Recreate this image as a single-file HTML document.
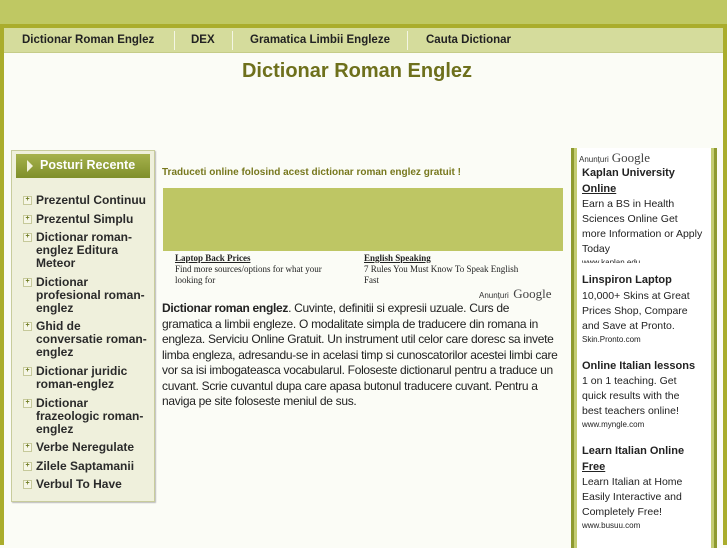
<!DOCTYPE html>
<html><head><meta charset="utf-8"><style>
*{margin:0;padding:0;box-sizing:border-box}
body{width:727px;height:545px;overflow:hidden;background:#fbfcf6;font-family:"Liberation Sans",sans-serif;position:relative;color:#222}
.a{position:absolute}
#top{left:0;top:0;width:727px;height:26px;background:#bfc863}
#frame{left:0;top:24px;width:727px;height:521px;border:4px solid #aaad2c;border-bottom:none;background:#fbfcf6}
#nav{left:4px;top:28px;width:719px;height:25px;background:#d5dc9c;border-bottom:1px solid #c5cc88}
#nav span{position:absolute;top:6px;font-size:11.5px;font-weight:bold;color:#222}
.sep{position:absolute;top:3px;width:1px;height:19px;background:#f4f6e4}
#title{left:0;width:714px;top:60px;text-align:center;font-size:20px;font-weight:bold;color:#6e701c}
#side{left:11px;top:150px;width:144px;height:352px;background:#eff0dc;border:1px solid #c8cc9c;box-shadow:1px 1px 1px #bbb}
#sh{left:16px;top:154px;width:134px;height:24px;background:linear-gradient(#a6b24d,#7f8f2a);color:#fff;font-weight:bold;font-size:12.5px;padding:4px 0 0 24px}
#sh:before{content:"";position:absolute;left:11px;top:6px;border-left:6px solid #f2f2dc;border-top:6px solid transparent;border-bottom:6px solid transparent}
ul{list-style:none;position:absolute;left:23px;top:194px;width:130px}
li{position:relative;padding-left:13px;font-size:12px;font-weight:bold;line-height:13px;margin-bottom:5.6px;color:#2a2a2a;white-space:nowrap}
li:before{content:"+";position:absolute;left:0;top:2px;width:7px;height:7px;border:1px solid #c6c99a;background:#f6f6e6;font-size:7px;line-height:6px;text-align:center;color:#6d7a20}
#trad{left:162px;top:167px;font-size:10px;font-weight:bold;color:#77781e}
#ad{left:163px;top:188px;width:400px;height:63px;background:#bec664}
.ser{font-family:"Liberation Serif",serif;font-size:9px;line-height:11px;color:#222;white-space:nowrap}
.ser b{text-decoration:underline}
#body{left:162px;top:301px;width:420px;font-size:12px;line-height:15.5px;color:#222;white-space:nowrap;letter-spacing:-0.3px}
#rc{left:571px;top:148px;width:146px;height:400px;background:#8e9a30;padding:0 3px}
#rc2{width:140px;height:100%;background:#c3cc72;padding:0 3px}
#rc3{width:134px;height:100%;background:#fff;padding:3px 5px;font-size:10.5px;line-height:15px;color:#222;white-space:nowrap;overflow:hidden}
#rc3 h4{font-size:11px;line-height:15.5px}
#rc3 .u{text-decoration:underline}
.sm{font-size:8px;line-height:11px}
.g{font-family:"Liberation Serif",serif;font-size:13px;color:#444}
.an{font-size:8px;color:#333}
</style></head><body>
<div class="a" id="top"></div>
<div class="a" id="frame"></div>
<div class="a" id="nav">
<span style="left:18px">Dictionar Roman Englez</span><div class="sep" style="left:170px"></div>
<span style="left:187px">DEX</span><div class="sep" style="left:228px"></div>
<span style="left:246px">Gramatica Limbii Engleze</span><div class="sep" style="left:403px"></div>
<span style="left:422px">Cauta Dictionar</span>
</div>
<div class="a" id="title">Dictionar Roman Englez</div>
<div class="a" id="side"></div>
<div class="a" id="sh">Posturi Recente</div>
<ul>
<li>Prezentul Continuu</li><li>Prezentul Simplu</li><li>Dictionar roman-<br>englez Editura<br>Meteor</li><li>Dictionar<br>profesional roman-<br>englez</li><li>Ghid de<br>conversatie roman-<br>englez</li><li>Dictionar juridic<br>roman-englez</li><li>Dictionar<br>frazeologic roman-<br>englez</li><li>Verbe Neregulate</li><li>Zilele Saptamanii</li><li>Verbul To Have</li>
</ul>
<div class="a" id="trad">Traduceti online folosind acest dictionar roman englez gratuit !</div>
<div class="a" id="ad"></div>
<div class="a ser" style="left:175px;top:253px"><b>Laptop Back Prices</b><br>Find more sources/options for what your<br>looking for</div>
<div class="a ser" style="left:364px;top:253px"><b>English Speaking</b><br>7 Rules You Must Know To Speak English<br>Fast</div>
<div class="a" style="left:479px;top:285px"><span class="an">Anunțuri</span> <span class="g">Google</span></div>
<div class="a" id="body"><b>Dictionar roman englez</b>. Cuvinte, definitii si expresii uzuale. Curs de<br>gramatica a limbii engleze. O modalitate simpla de traducere din romana in<br>engleza. Serviciu Online Gratuit. Un instrument util celor care doresc sa invete<br>limba engleza, adresandu-se in acelasi timp si cunoscatorilor acestei limbi care<br>vor sa isi imbogateasca vocabularul. Foloseste dictionarul pentru a traduce un<br>cuvant. Scrie cuvantul dupa care apasa butonul traducere cuvant. Pentru a<br>naviga pe site foloseste meniul de sus.</div>
<div class="a" id="rc"><div id="rc2"><div id="rc3">
<div style="margin-left:-3px;line-height:13px"><span class="an">Anunțuri</span> <span class="g">Google</span></div>
<h4>Kaplan University<br><span class="u">Online</span></h4>
<div>Earn a BS in Health<br>Sciences Online Get<br>more Information or Apply<br>Today</div>
<div class="sm" style="height:6px;overflow:hidden">www.kaplan.edu</div>
<h4 style="margin-top:10px">Linspiron Laptop</h4>
<div>10,000+ Skins at Great<br>Prices Shop, Compare<br>and Save at Pronto.</div>
<div class="sm">Skin.Pronto.com</div>
<h4 style="margin-top:14px">Online Italian lessons</h4>
<div>1 on 1 teaching. Get<br>quick results with the<br>best teachers online!</div>
<div class="sm">www.myngle.com</div>
<h4 style="margin-top:14px">Learn Italian Online<br><span class="u">Free</span></h4>
<div>Learn Italian at Home<br>Easily Interactive and<br>Completely Free!</div>
<div class="sm">www.busuu.com</div>
</div></div></div>
</body></html>
